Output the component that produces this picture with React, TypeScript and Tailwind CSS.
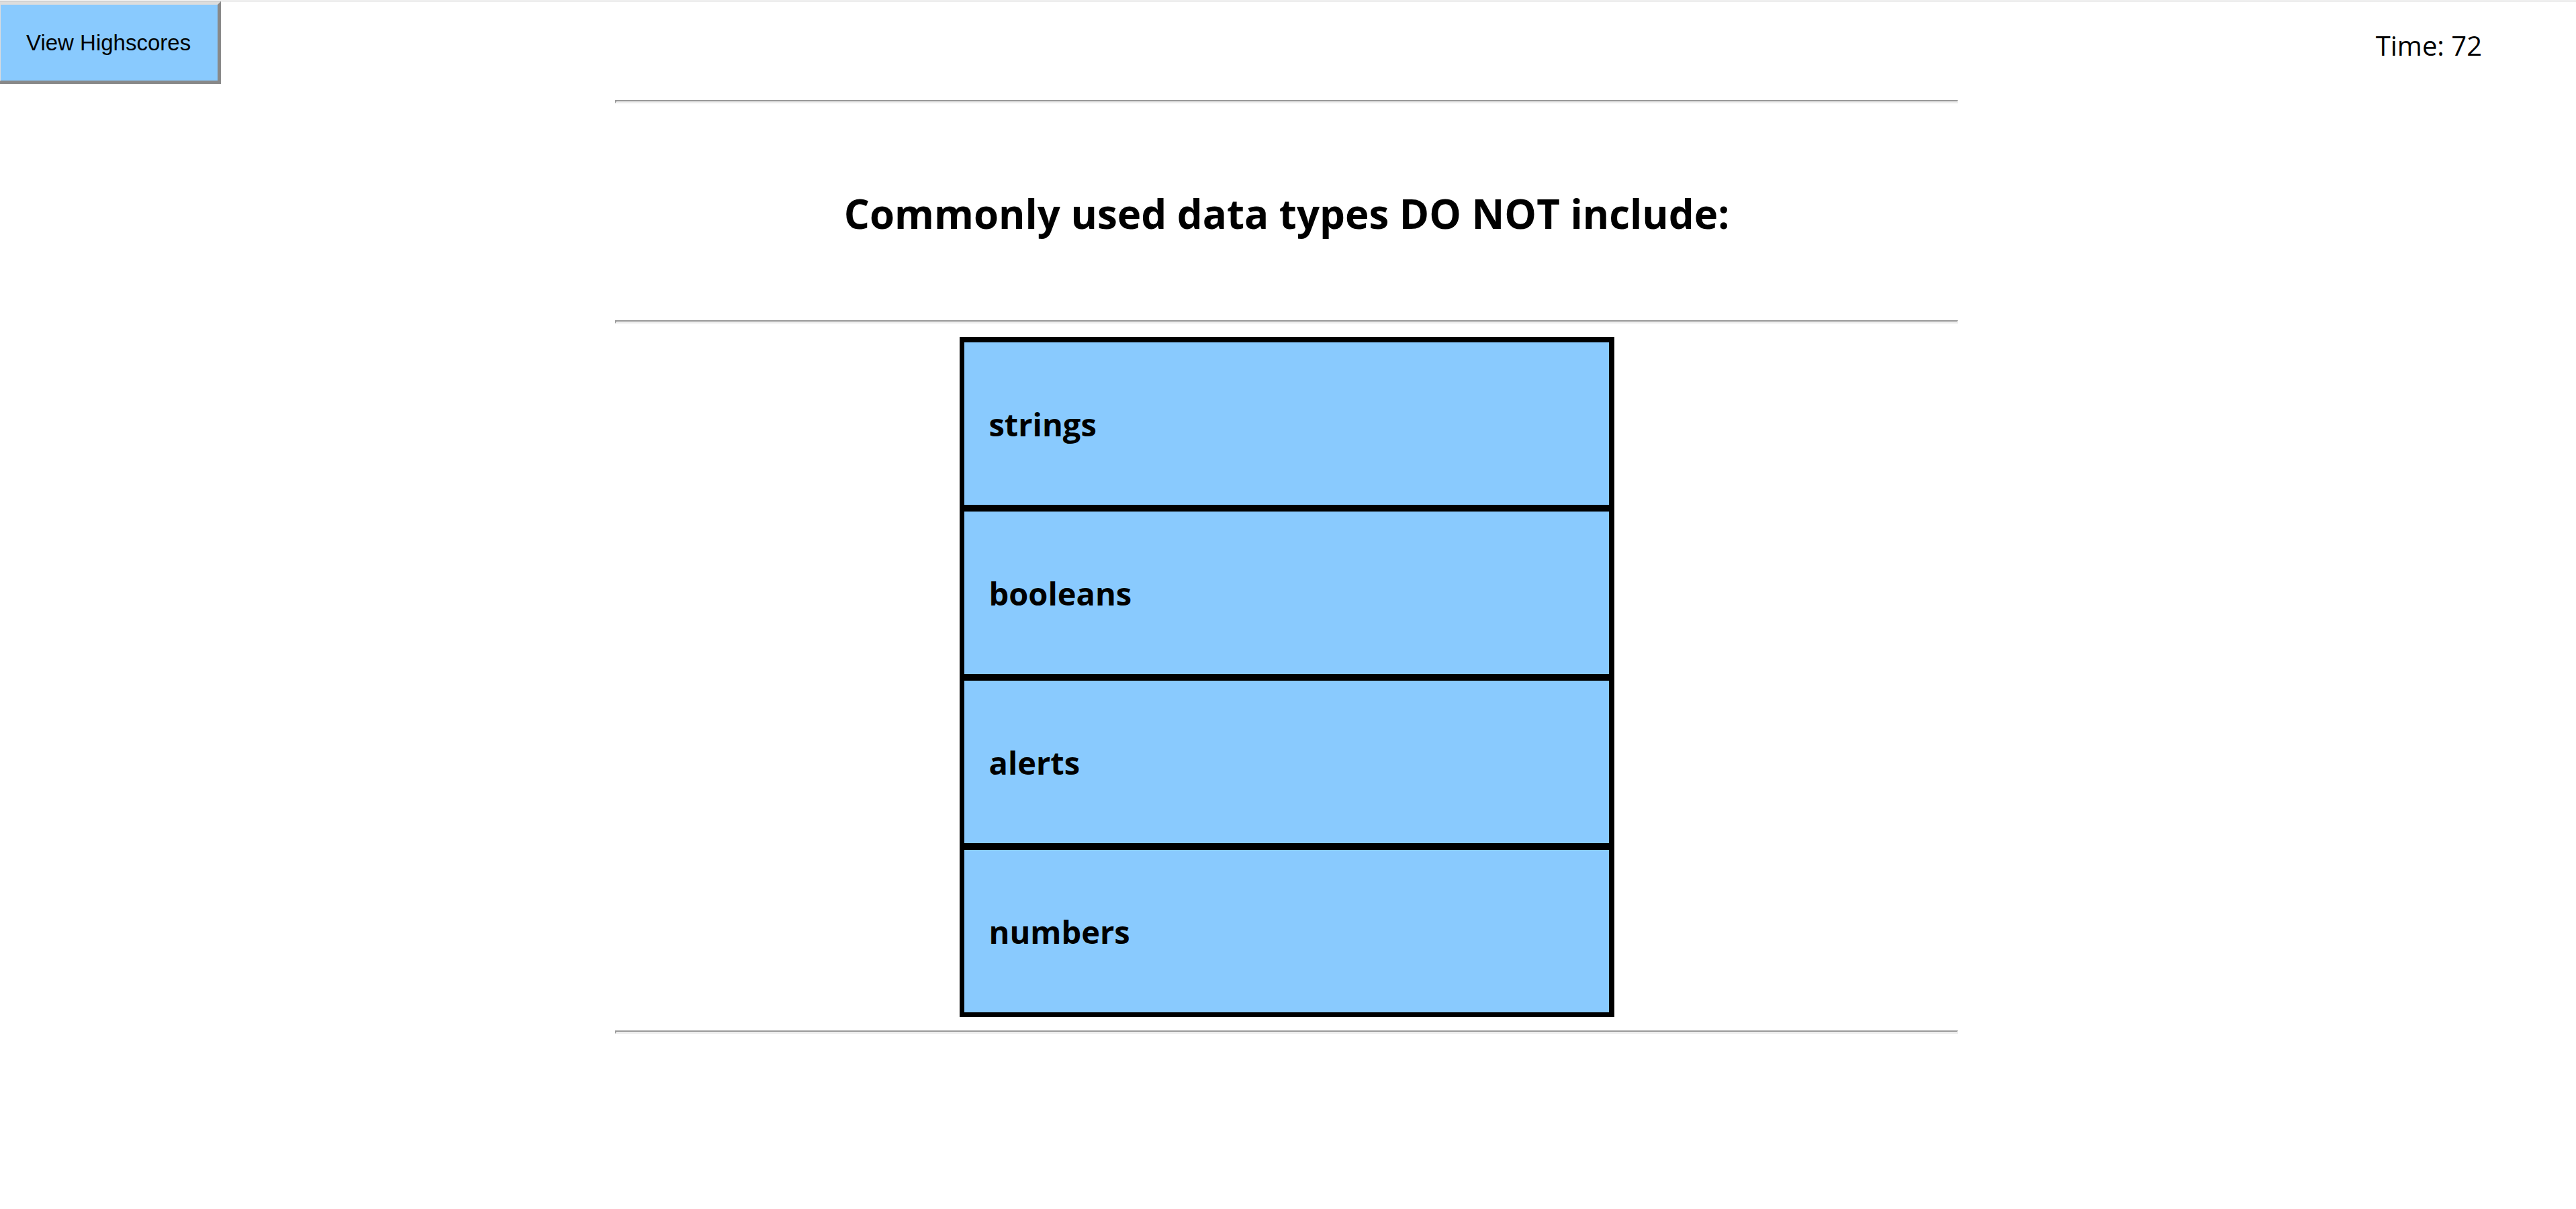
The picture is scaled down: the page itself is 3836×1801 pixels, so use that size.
const answers = ["strings", "booleans", "alerts", "numbers"];

function Rule() {
  return (
    <hr className="h-[5px] w-full max-w-[2000px] border-t-2 border-r-2 border-b-3 border-l-2 border-t-[#999999] border-r-[#eeeeee] border-b-[#eeeeee] border-l-[#999999]" />
  );
}

export default function App() {
  return (
    <div className="overflow-hidden bg-white pt-px font-['Open_Sans','Noto_Sans',sans-serif] text-black">
      <div className="-ml-1 border-t border-[#b0b0b0]">
        <header className="flex items-start justify-between">
          <button
            type="button"
            className="border-5 border-t-[#dddddd] border-r-[#888888] border-b-[#888888] border-l-[#dddddd] bg-[#89cafe] pr-10 pl-[38px] py-[37px] font-['Liberation_Sans',sans-serif] text-[33px] leading-[39px]"
          >
            View Highscores
          </button>
          <p className="pt-10 pr-[140px] text-[40px] leading-[52px]">Time: 72</p>
        </header>
        <main className="flex flex-col items-center pt-6">
          <Rule />
          <h1 className="pt-[125px] pb-[119px] text-center text-[60px] leading-[79px] font-bold">
            Commonly used data types DO NOT include:
          </h1>
          <Rule />
          <ul className="my-5 w-full max-w-[975px] divide-y-10 divide-black border-t-8 border-r-8 border-b-7 border-l-7 border-black">
            {answers.map((answer) => (
              <li key={answer}>
                <button
                  type="button"
                  className="block w-full bg-[#89cafe] px-[37px] pt-[88px] pb-[86px] text-left text-[47px] leading-[68px] font-bold"
                >
                  {answer}
                </button>
              </li>
            ))}
          </ul>
          <Rule />
        </main>
      </div>
    </div>
  );
}
